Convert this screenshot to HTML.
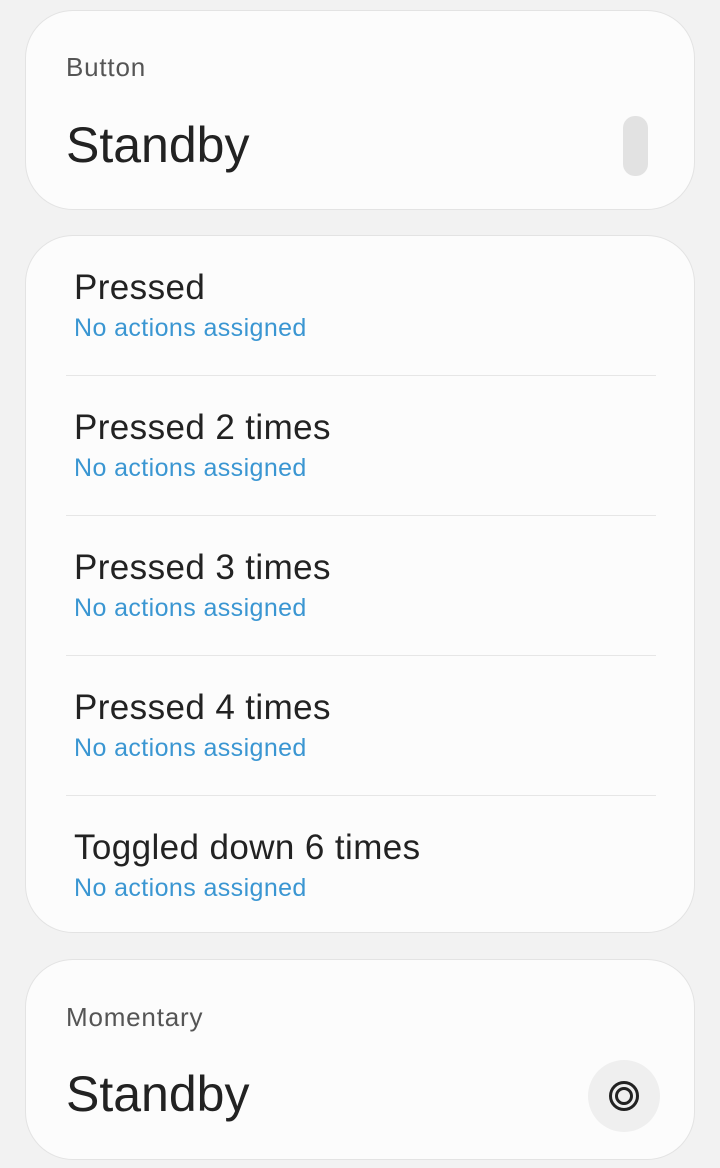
<!DOCTYPE html>
<html><head><style>
body{margin:0;width:720px;height:1168px;background:#f2f2f2;font-family:"Liberation Sans",sans-serif;position:relative;overflow:hidden}
.card{position:absolute;left:25px;width:670px;background:#fcfcfc;border:1px solid #e3e3e3;border-radius:48px;box-sizing:border-box}
.t{position:absolute;white-space:nowrap}
.lab{font-size:26px;color:#555;left:40px;letter-spacing:0.8px}
.big{font-size:50px;color:#222;left:40px;font-weight:300}
.ti{font-size:35px;color:#222;left:48px;letter-spacing:0.4px}
.su{font-size:25px;color:#3a96d2;left:48px;letter-spacing:0.4px}
.div{position:absolute;left:40px;width:590px;height:1px;background:#e6e6e6}
</style></head><body>
<div class="card" style="top:10px;height:200px">
<div class="t lab" style="top:41px">Button</div>
<div class="t big" style="top:105px">Standby</div>
<div style="position:absolute;left:597px;top:105px;width:25px;height:60px;border-radius:12px;background:#e2e2e2"></div>
</div>
<div class="card" style="top:235px;height:698px">
<div class="t ti" style="top:32px">Pressed</div><div class="t su" style="top:78px">No actions assigned</div>
<div class="div" style="top:139px"></div>
<div class="t ti" style="top:172px">Pressed 2 times</div><div class="t su" style="top:218px">No actions assigned</div>
<div class="div" style="top:279px"></div>
<div class="t ti" style="top:312px">Pressed 3 times</div><div class="t su" style="top:358px">No actions assigned</div>
<div class="div" style="top:419px"></div>
<div class="t ti" style="top:452px">Pressed 4 times</div><div class="t su" style="top:498px">No actions assigned</div>
<div class="div" style="top:559px"></div>
<div class="t ti" style="top:592px">Toggled down 6 times</div><div class="t su" style="top:638px">No actions assigned</div>
</div>
<div class="card" style="top:959px;height:201px">
<div class="t lab" style="top:42px">Momentary</div>
<div class="t big" style="top:105px">Standby</div>
<div style="position:absolute;left:562px;top:100px;width:72px;height:72px;border-radius:50%;background:#efefef"></div>
<svg style="position:absolute;left:582px;top:120px" width="32" height="32" viewBox="0 0 32 32"><circle cx="16" cy="16" r="13.5" fill="none" stroke="#222" stroke-width="3"/><circle cx="16" cy="16" r="7.5" fill="none" stroke="#222" stroke-width="3"/></svg>
</div>
</body></html>
